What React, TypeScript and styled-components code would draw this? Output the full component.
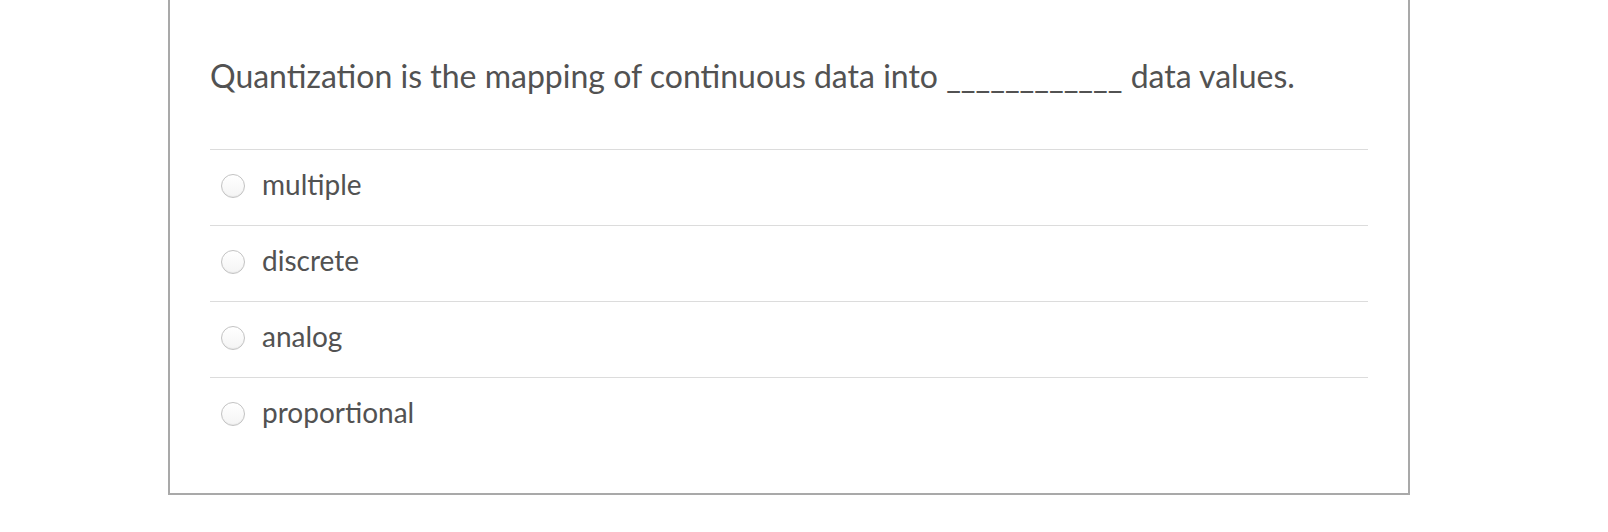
import React from 'react';
import styled, { createGlobalStyle } from 'styled-components';

const GlobalStyle = createGlobalStyle`
  html, body {
    margin: 0;
    padding: 0;
    background: #ffffff;
  }
  body {
    font-family: Lato, "Noto Sans", "Liberation Sans", sans-serif;
    color: #525252;
  }
`;

const Page = styled.div`
  width: 1608px;
  height: 532px;
  padding-left: 168px;
  box-sizing: border-box;
  overflow: hidden;
`;

const Card = styled.div`
  width: 1242px;
  box-sizing: border-box;
  border: 2px solid #a9a9a9;
  border-top: none;
  padding: 0 40px 40px 40px;
`;

const Question = styled.div`
  padding-top: 56px;
  margin-bottom: 54px;
  font-size: 32px;
  line-height: 39px;
  color: #525252;
`;

const AnswerList = styled.ul`
  list-style: none;
  margin: 0;
  padding: 0;
`;

const AnswerRow = styled.li`
  display: flex;
  align-items: center;
  height: 76px;
  box-sizing: border-box;
  border-top: 1px solid #dcdcdc;
  padding-left: 11px;
  padding-bottom: 4px;
`;

const Radio = styled.span`
  width: 24px;
  height: 24px;
  border-radius: 50%;
  box-sizing: border-box;
  border: 1px solid #c3c3c3;
  background: linear-gradient(#ffffff, #f4f4f4);
  box-shadow: inset 0 -1px 1px rgba(0, 0, 0, 0.05);
  flex-shrink: 0;
`;

const AnswerLabel = styled.span`
  margin-left: 17px;
  margin-bottom: 4px;
  font-size: 28px;
  color: #525252;
`;

const answers = ['multiple', 'discrete', 'analog', 'proportional'];

export default function App() {
  return (
    <>
      <GlobalStyle />
      <Page>
        <Card>
          <Question>
            {'Quantization is the mapping of continuous data into ____________ data values.'}
          </Question>
          <AnswerList>
            {answers.map((a) => (
              <AnswerRow key={a}>
                <Radio />
                <AnswerLabel>{a}</AnswerLabel>
              </AnswerRow>
            ))}
          </AnswerList>
        </Card>
      </Page>
    </>
  );
}
